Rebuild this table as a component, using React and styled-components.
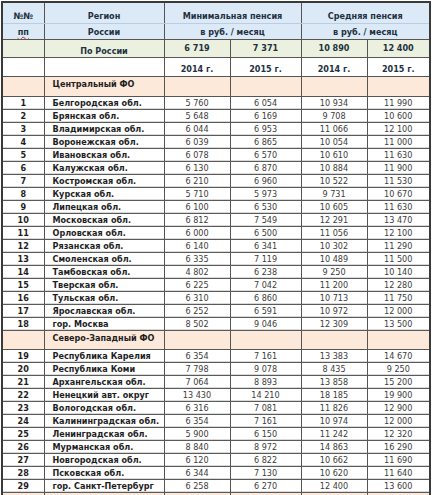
import React from 'react'
import styled, {createGlobalStyle} from 'styled-components'

const GlobalStyle = createGlobalStyle`
body {
  margin: 0;
  background: #fff;
}
`

const Page = styled.div`
padding: 1px 0 0 1px;
`

const Table = styled.table`
border-collapse: collapse;
table-layout: fixed;
width: 430px;
border: 2px solid #3a3a3a;
font-family: "DejaVu Sans Condensed", "DejaVu Sans", sans-serif;
color: #1e1e1e;
`

const Row = styled.tr`
height: ${p => p.$h}px;
background: ${p => p.$bg || '#fff'};
`

const Cell = styled.td`
border: 1px solid #555;
padding: ${p => p.$pt || 0}px 2px 0 ${p => p.$left ? 8 : 2}px;
font-size: 9px;
line-height: 11px;
text-align: ${p => p.$left ? 'left' : 'center'};
vertical-align: top;
font-weight: ${p => p.$bold ? 'bold' : 'normal'};
white-space: nowrap;
overflow: hidden;
`

const HeadCell = styled(Cell)`
font-weight: bold;
color: #22313f;
border-bottom-color: ${p => p.$soft ? '#b9cde3' : '#555'};
`

const DataCell = styled(Cell)`
vertical-align: middle;
padding-top: 1px;
border-top: 1px solid #5a5a5a;
border-bottom: 1px solid #5a5a5a;
box-shadow: inset 0 -1px 0 #d9d9d9;
color: ${p => p.$bold ? '#1e1e1e' : '#3c3c3c'};
`

const Spell = styled.span`
text-decoration: underline wavy #d02020;
text-decoration-thickness: 1px;
`

const BLUE = '#dce9f6'
const GREEN = '#ebf1de'
const PEACH = '#fde9d9'

const central = [
  ['1', 'Белгородская обл.', '5 760', '6 054', '10 934', '11 990'],
  ['2', 'Брянская обл.', '5 648', '6 169', '9 708', '10 600'],
  ['3', 'Владимирская обл.', '6 044', '6 953', '11 066', '12 100'],
  ['4', 'Воронежская обл.', '6 039', '6 865', '10 054', '11 000'],
  ['5', 'Ивановская обл.', '6 078', '6 570', '10 610', '11 630'],
  ['6', 'Калужская обл.', '6 130', '6 870', '10 884', '11 900'],
  ['7', 'Костромская обл.', '6 210', '6 960', '10 522', '11 530'],
  ['8', 'Курская обл.', '5 710', '5 973', '9 731', '10 670'],
  ['9', 'Липецкая обл.', '6 100', '6 530', '10 605', '11 630'],
  ['10', 'Московская обл.', '6 812', '7 549', '12 291', '13 470'],
  ['11', 'Орловская обл.', '6 000', '6 500', '11 056', '12 100'],
  ['12', 'Рязанская обл.', '6 140', '6 341', '10 302', '11 290'],
  ['13', 'Смоленская обл.', '6 335', '7 119', '10 489', '11 500'],
  ['14', 'Тамбовская обл.', '4 802', '6 238', '9 250', '10 140'],
  ['15', 'Тверская обл.', '6 225', '7 042', '11 200', '12 280'],
  ['16', 'Тульская обл.', '6 310', '6 860', '10 713', '11 750'],
  ['17', 'Ярославская обл.', '6 252', '6 591', '10 972', '12 000'],
  ['18', 'гор. Москва', '8 502', '9 046', '12 309', '13 500'],
]

const northWest = [
  ['19', 'Республика Карелия', '6 354', '7 161', '13 383', '14 670'],
  ['20', 'Республика Коми', '7 798', '9 078', '8 435', '9 250'],
  ['21', 'Архангельская обл.', '7 064', '8 893', '13 858', '15 200'],
  ['22', 'Ненецкий авт. округ', '13 430', '14 210', '18 185', '19 900'],
  ['23', 'Вологодская обл.', '6 316', '7 081', '11 826', '12 900'],
  ['24', 'Калининградская обл.', '6 354', '7 161', '10 974', '12 000'],
  ['25', 'Ленинградская обл.', '5 900', '6 150', '11 242', '12 320'],
  ['26', 'Мурманская обл.', '8 840', '8 972', '14 863', '16 290'],
  ['27', 'Новгородская обл.', '6 120', '6 822', '10 662', '11 690'],
  ['28', 'Псковская обл.', '6 344', '7 130', '10 620', '11 640'],
  ['29', 'гор. Санкт-Петербург', '6 258', '6 270', '12 400', '13 600'],
]

const DataRow = ({r}) => (
  <Row $h={13}>
    <DataCell $bold>{r[0]}</DataCell>
    <DataCell $left $bold>{r[1]}</DataCell>
    <DataCell>{r[2]}</DataCell>
    <DataCell>{r[3]}</DataCell>
    <DataCell>{r[4]}</DataCell>
    <DataCell>{r[5]}</DataCell>
  </Row>
)

const DistrictRow = ({name, h}) => (
  <Row $h={h} $bg={PEACH}>
    <Cell />
    <Cell $left $bold $pt={2}>{name}</Cell>
    <Cell />
    <Cell />
    <Cell />
    <Cell />
  </Row>
)

const App = () => {
  return (
    <>
      <GlobalStyle />
      <Page>
        <Table>
          <colgroup>
            <col style={{width: 42}} />
            <col style={{width: 120}} />
            <col style={{width: 66}} />
            <col style={{width: 71}} />
            <col style={{width: 66}} />
            <col style={{width: 63}} />
          </colgroup>
          <tbody>
            <Row $h={21} $bg={BLUE}>
              <HeadCell $soft $pt={8}>№№</HeadCell>
              <HeadCell $soft $pt={8}>Регион</HeadCell>
              <HeadCell $soft $pt={8} colSpan={2}>Минимальная пенсия</HeadCell>
              <HeadCell $soft $pt={8} colSpan={2}>Средняя пенсия</HeadCell>
            </Row>
            <Row $h={16} $bg={BLUE}>
              <HeadCell $pt={3}><Spell>пп</Spell></HeadCell>
              <HeadCell $pt={3}>России</HeadCell>
              <HeadCell $pt={3} colSpan={2}>в руб. / месяц</HeadCell>
              <HeadCell $pt={3} colSpan={2}>в руб. / месяц</HeadCell>
            </Row>
            <Row $h={18} $bg={GREEN}>
              <HeadCell />
              <HeadCell $pt={6}>По России</HeadCell>
              <HeadCell $pt={3}>6 719</HeadCell>
              <HeadCell $pt={3}>7 371</HeadCell>
              <HeadCell $pt={3}>10 890</HeadCell>
              <HeadCell $pt={3}>12 400</HeadCell>
            </Row>
            <Row $h={19}>
              <HeadCell />
              <HeadCell />
              <HeadCell $pt={6}>2014 г.</HeadCell>
              <HeadCell $pt={6}>2015 г.</HeadCell>
              <HeadCell $pt={6}>2014 г.</HeadCell>
              <HeadCell $pt={6}>2015 г.</HeadCell>
            </Row>
            <DistrictRow name='Центральный ФО' h={20} />
            {central.map(r => <DataRow key={r[0]} r={r} />)}
            <DistrictRow name='Северо-Западный ФО' h={19} />
            {northWest.map(r => <DataRow key={r[0]} r={r} />)}
            <DistrictRow name='' h={19} />
          </tbody>
        </Table>
      </Page>
    </>
  )
}

export default App
